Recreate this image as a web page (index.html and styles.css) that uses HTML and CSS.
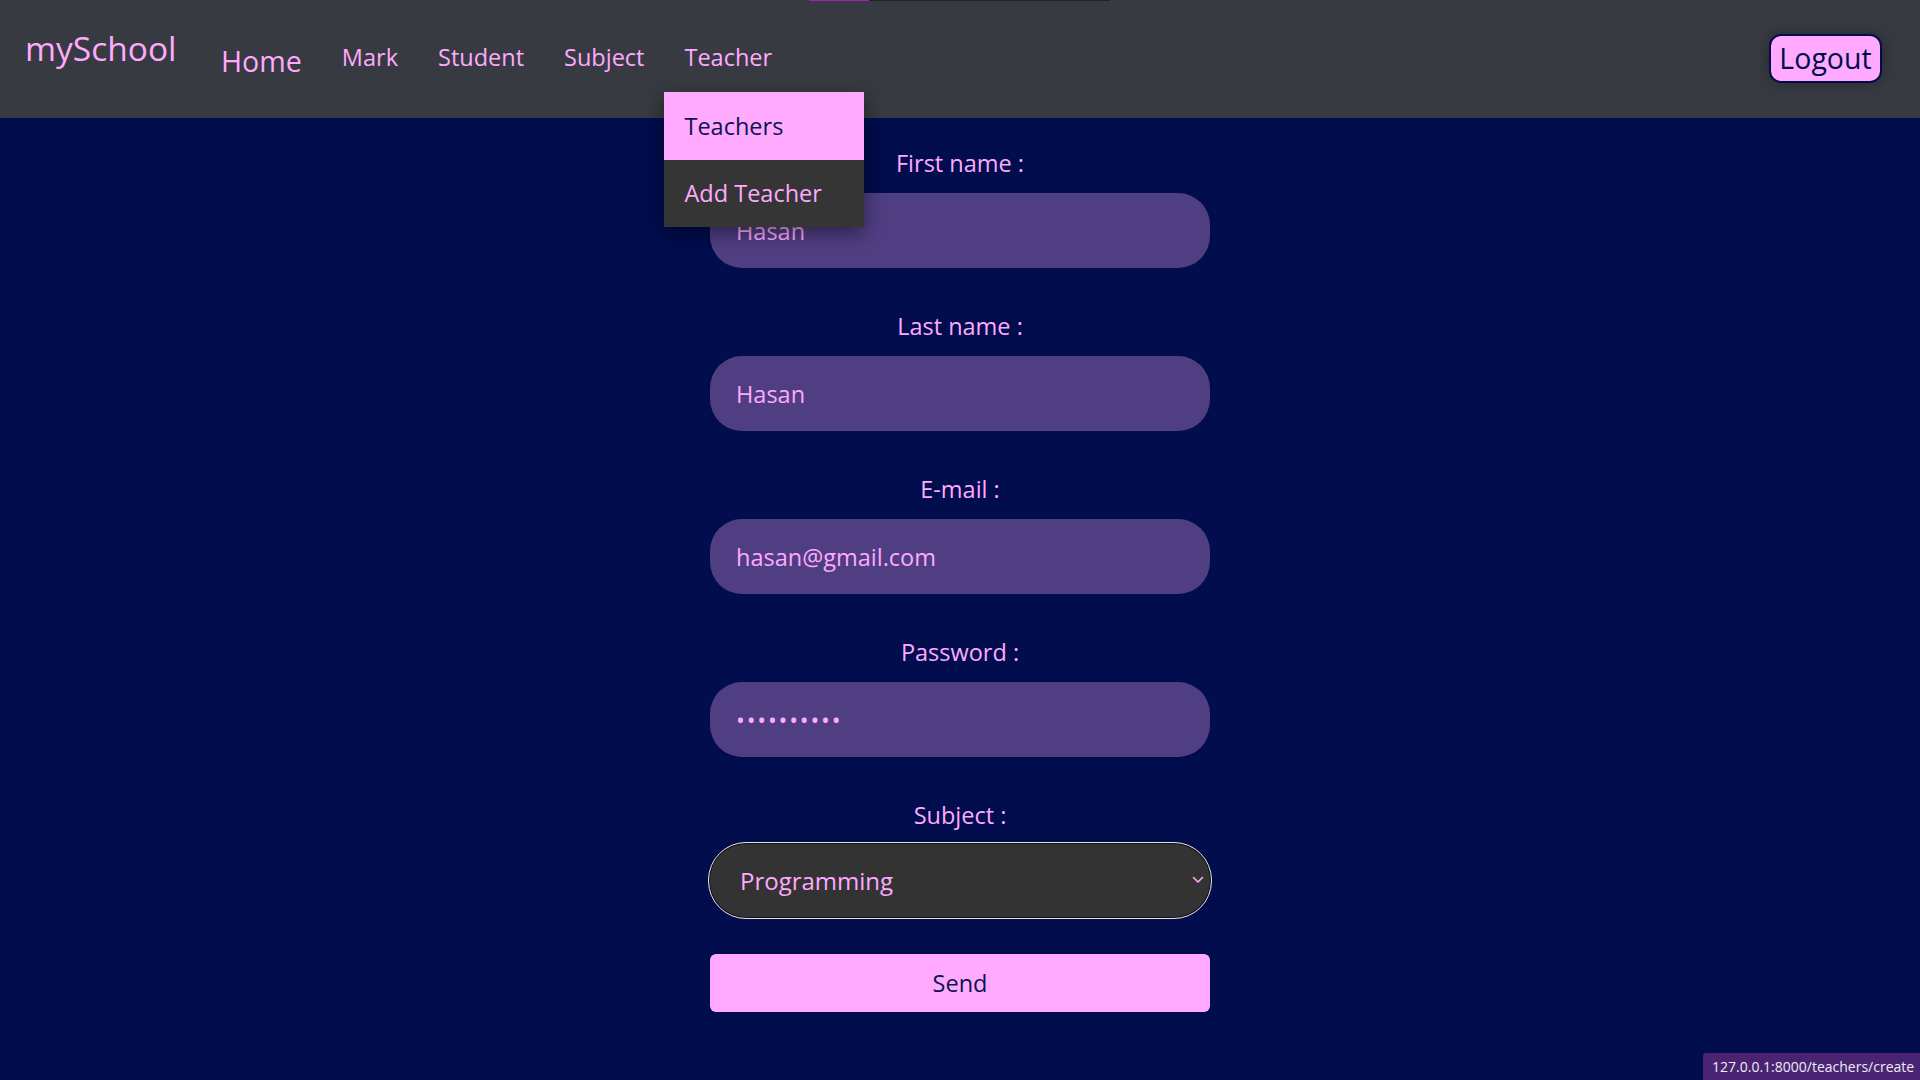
FILE: index.html
```html
<!DOCTYPE html>
<html lang="en">
<head>
<meta charset="utf-8">
<title>mySchool - Add Teacher</title>
<link rel="stylesheet" href="styles.css">
</head>
<body>
<div class="progress"><span class="progress-fill"></span></div>
<nav class="navbar">
  <a class="brand" href="#">mySchool</a>
  <ul class="nav-links">
    <li class="nav-item home"><a href="#">Home</a></li>
    <li class="nav-item"><a href="#">Mark</a></li>
    <li class="nav-item"><a href="#">Student</a></li>
    <li class="nav-item"><a href="#">Subject</a></li>
    <li class="nav-item dropdown">
      <a href="#">Teacher</a>
      <ul class="dropdown-menu">
        <li><a class="dropdown-item active" href="#">Teachers</a></li>
        <li><a class="dropdown-item" href="#">Add Teacher</a></li>
      </ul>
    </li>
  </ul>
  <button class="logout" type="button">Logout</button>
</nav>

<main class="main">
  <form class="form">
    <div class="group">
      <label class="label" for="fn">First name :</label>
      <input class="field" id="fn" type="text" value="Hasan">
    </div>
    <div class="group">
      <label class="label" for="ln">Last name :</label>
      <input class="field" id="ln" type="text" value="Hasan">
    </div>
    <div class="group">
      <label class="label" for="em">E-mail :</label>
      <input class="field" id="em" type="email" value="hasan@gmail.com">
    </div>
    <div class="group">
      <label class="label" for="pw">Password :</label>
      <input class="field password" id="pw" type="password" value="hasan12345">
    </div>
    <div class="group select-group">
      <label class="label" for="sub">Subject :</label>
      <div class="select-wrap">
        <select class="select" id="sub">
          <option>Programming</option>
        </select>
        <svg class="chev" width="12" height="8" viewBox="0 0 12 8"><path d="M1.5 1.5 L6 6 L10.5 1.5" fill="none" stroke="#ffaaff" stroke-width="1.6" stroke-linecap="round" stroke-linejoin="round"/></svg>
      </div>
    </div>
    <button class="send" type="button">Send</button>
  </form>
</main>

<div class="status">127.0.0.1:8000/teachers/create</div>
</body>
</html>
```

FILE: styles.css
```css
* { box-sizing: border-box; }

html, body {
  margin: 0;
  padding: 0;
}

body {
  background: #010d4d;
  font-family: "Open Sans", "Noto Sans", sans-serif;
  color: #ffaaff;
  min-height: 1080px;
  overflow: hidden;
}

.progress {
  position: absolute;
  top: 0;
  left: 809px;
  width: 301px;
  height: 1px;
  background: #232428;
  z-index: 20;
}
.progress-fill {
  display: block;
  width: 60px;
  height: 1px;
  background: #9c22b4;
}

.navbar {
  display: flex;
  align-items: flex-start;
  height: 118px;
  background: #373a40;
  padding: 0 38px 0 25px;
}

.brand {
  margin-top: 28px;
  font-size: 33.5px;
  line-height: 40px;
  color: #ffaaff;
  text-decoration: none;
}

.nav-links {
  display: flex;
  align-items: flex-start;
  list-style: none;
  margin: 0 0 0 24.5px;
  padding: 0;
}

.nav-item {
  margin-top: 37px;
}
.nav-item > a {
  display: block;
  padding: 0 20px;
  font-size: 23.5px;
  line-height: 40px;
  color: #ffaaff;
  text-decoration: none;
}
.nav-item.home {
  margin-top: 41px;
}
.nav-item.home > a {
  font-size: 28.6px;
}

.dropdown {
  position: relative;
}
.dropdown-menu {
  position: absolute;
  left: 0;
  top: calc(100% + 15px);
  width: 200px;
  margin: 0;
  padding: 0;
  list-style: none;
  background: #353535;
  box-shadow: 0 6px 18px rgba(0, 0, 0, 0.45);
  z-index: 10;
}
.dropdown-item {
  display: flex;
  align-items: center;
  height: 67.5px;
  padding: 0 20px;
  font-size: 23.5px;
  color: #ffaaff;
  text-decoration: none;
}
.dropdown-item.active {
  background: #ffaaff;
  color: #0c1450;
}

.logout {
  margin-left: auto;
  margin-top: 34px;
  height: 49px;
  width: 113px;
  padding: 0;
  border: 2px solid #010d4d;
  border-radius: 12px;
  background: #ffaaff;
  color: #010d4d;
  font-family: "Open Sans", "Noto Sans", sans-serif;
  font-size: 28.5px;
  line-height: 1;
  box-shadow: 0 0 14px rgba(0, 0, 0, 0.3);
}

.main {
  display: flex;
  justify-content: center;
  padding-top: 29px;
}

.form {
  width: 500px;
  display: flex;
  flex-direction: column;
}

.group {
  display: flex;
  flex-direction: column;
  margin-bottom: 42px;
}

.label {
  display: block;
  text-align: center;
  font-size: 23.5px;
  line-height: 32px;
  margin-bottom: 14px;
  color: #ffaaff;
}

.field {
  width: 500px;
  height: 75px;
  border: none;
  border-radius: 32px;
  background: #4f3e82;
  color: #ffaaff;
  padding: 0 26px;
  font-family: "Open Sans", "Noto Sans", sans-serif;
  font-size: 23.5px;
  outline: none;
}
.field.password {
  letter-spacing: 1.8px;
}

.select-group {
  margin-bottom: 35px;
}
.select-group .label {
  margin-bottom: 11px;
}

.select-wrap {
  position: relative;
  margin: 0 -2px;
}
.select {
  display: block;
  width: 504px;
  height: 77px;
  appearance: none;
  -webkit-appearance: none;
  background: #333333;
  color: #ffaaff;
  border: 1px solid #e4e4e4;
  box-shadow: inset 0 0 0 1px #111111;
  border-radius: 38px;
  padding: 0 40px 0 31px;
  font-family: "Open Sans", "Noto Sans", sans-serif;
  font-size: 24px;
  outline: none;
}
.chev {
  position: absolute;
  right: 8px;
  top: 34px;
  pointer-events: none;
}

.send {
  width: 500px;
  height: 58px;
  border: none;
  border-radius: 6px;
  background: #ffaaff;
  color: #0c1450;
  font-family: "Open Sans", "Noto Sans", sans-serif;
  font-size: 23.5px;
}

.status {
  position: fixed;
  right: 0;
  bottom: 0;
  width: 217px;
  height: 27px;
  padding: 0 0 0 9px;
  background: #4a2472;
  color: #ececf4;
  font-family: "Open Sans", "Noto Sans", sans-serif;
  font-size: 14px;
  line-height: 27px;
  border-top-left-radius: 3px;
  white-space: nowrap;
}
```
